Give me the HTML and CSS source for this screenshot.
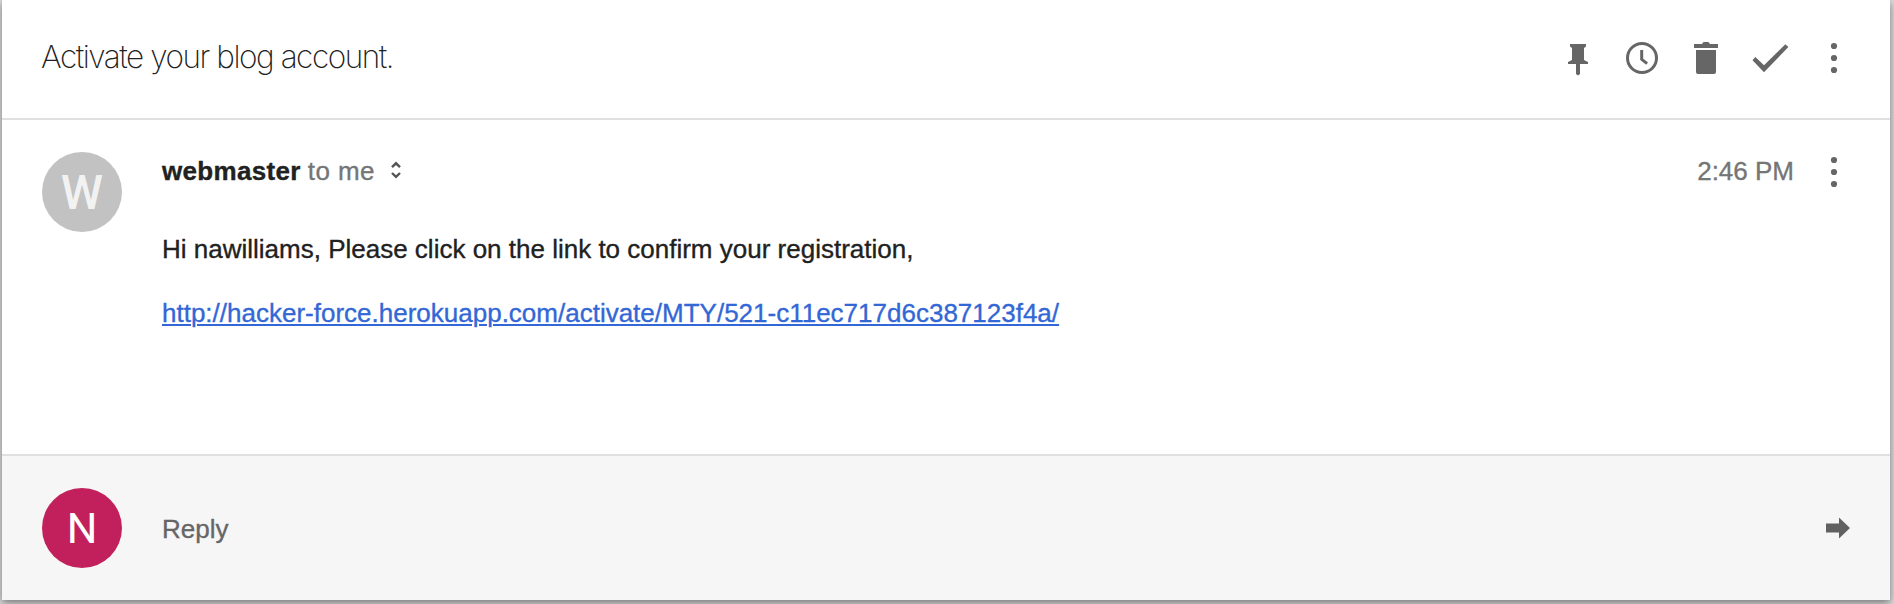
FILE: index.html
```
<!DOCTYPE html>
<html lang="en">
<head>
<meta charset="utf-8">
<title>Activate your blog account.</title>
<link rel="stylesheet" href="styles.css">
</head>
<body>
<main class="card">
  <header class="header">
    <h1 class="subject">Activate your blog account.</h1>
    <div class="actions">
      <svg class="icon" viewBox="0 0 48 48"><path d="M16 10h16v2.500l-2 1.500v12l4 2v2h-8v10l-2 1.500-2-1.500V30h-8v-2l4-2V14l-2-1.500z"/></svg>
      <svg class="icon" viewBox="0 0 48 48"><circle class="line" cx="24" cy="24" r="14.500"/><path class="line" d="M23.700 16v9.300l5.400 4.300"/></svg>
      <svg class="icon" viewBox="0 0 48 48"><path d="M12 10h8l1.500-2h5l1.500 2h8v4H12zM14 16h20v22a2 2 0 0 1-2 2H16a2 2 0 0 1-2-2z"/></svg>
      <svg class="icon" viewBox="0 0 48 48"><path d="M6.500 26.300 18 38.300 42.400 13 39.400 10.200 18 31.300 9.300 23z"/></svg>
      <svg class="icon" viewBox="0 0 48 48"><circle cx="24" cy="12" r="3.100"/><circle cx="24" cy="24" r="3.100"/><circle cx="24" cy="36" r="3.100"/></svg>
    </div>
  </header>
  <article class="message">
    <div class="avatar avatar-sender">W</div>
    <div class="content">
      <div class="meta">
        <span class="sender">webmaster</span>
        <span class="recipient">to me</span>
        <svg class="expand" viewBox="0 0 10 18"><path d="M1 6.200 5 2.300l4 3.900M1 12l4 3.900L9 12"/></svg>
        <span class="time">2:46 PM</span>
        <svg class="icon" viewBox="0 0 48 48"><circle cx="24" cy="12" r="3.100"/><circle cx="24" cy="24" r="3.100"/><circle cx="24" cy="36" r="3.100"/></svg>
      </div>
      <p class="text">Hi nawilliams, Please click on the link to confirm your registration,</p>
      <p class="text"><a class="link" href="#">http://hacker-force.herokuapp.com/activate/MTY/521-c11ec717d6c387123f4a/</a></p>
    </div>
  </article>
  <footer class="reply">
    <div class="avatar avatar-me">N</div>
    <span class="reply-label">Reply</span>
    <svg class="send" viewBox="0 0 24 22"><path d="M0 6.500h13V.5L24 11 13 21.500v-6H0z"/></svg>
  </footer>
</main>
</body>
</html>
```
FILE: styles.css
```
* { box-sizing: border-box; }
body {
  margin: 0;
  height: 604px;
  overflow: hidden;
  background: #dadada;
  font-family: "Liberation Sans", Arial, sans-serif;
  font-size: 26px;
  color: #212121;
  -webkit-text-stroke: .35px currentColor;
}
.card {
  width: 1888px;
  height: 600px;
  margin-left: 2px;
  display: flex;
  flex-direction: column;
  background: #fff;
  box-shadow: 0 3px 8px rgba(0, 0, 0, .45);
}
.header {
  height: 120px;
  flex: none;
  display: flex;
  align-items: center;
  justify-content: space-between;
  padding: 0 32px 2px 39px;
  border-bottom: 2px solid #e0e0e0;
}
.subject {
  margin: 0;
  padding-bottom: 2px;
  font-family: Inter, "Liberation Sans", sans-serif;
  font-size: 31.500px;
  font-weight: 200;
  line-height: 40px;
  letter-spacing: -1.450px;
  -webkit-text-stroke: 0;
}
.actions { display: flex; gap: 16px; }
.icon { width: 48px; height: 48px; flex: none; fill: #666; }
.line { fill: none; stroke: #666; stroke-width: 3; }
.message {
  height: 336px;
  flex: none;
  display: flex;
  align-items: flex-start;
  gap: 40px;
  padding: 32px 32px 0 40px;
  border-bottom: 2px solid #e0e0e0;
}
.avatar {
  width: 80px;
  height: 80px;
  flex: none;
  border-radius: 50%;
  text-align: center;
  font-family: Roboto, sans-serif;
  -webkit-text-stroke: 0;
}
.avatar-sender {
  background: #c2c2c2;
  color: #f2f2f2;
  font-size: 48px;
  font-weight: 500;
  line-height: 81px;
}
.avatar-me {
  background: #c2205d;
  color: #fff;
  font-size: 43px;
  line-height: 80px;
}
.content { flex: 1; }
.meta {
  height: 40px;
  display: flex;
  align-items: center;
  line-height: 38px;
}
.sender { padding-bottom: 2px; font-weight: 700; letter-spacing: .330px; }
.recipient { padding-bottom: 2px; margin-left: 7px; color: #757575; letter-spacing: .400px; }
.expand {
  width: 10px;
  height: 18px;
  margin: -4px 0 0 16px;
  fill: none;
  stroke: #555;
  stroke-width: 2.400;
}
.time { padding-bottom: 2px; margin-left: auto; margin-right: 16px; color: #757575; }
.text { margin: 0; line-height: 64px; height: 64px; }
.text:first-of-type { margin-top: 25px; }
.link {
  color: #3367d6;
  text-decoration-thickness: 2px;
  text-underline-offset: 2px;
}
.reply {
  height: 144px;
  flex: none;
  display: flex;
  align-items: center;
  padding: 0 40px;
  background: #f6f6f6;
}
.reply-label { padding-top: 2px; margin-left: 40px; color: #666; }
.send { width: 24px; height: 22px; margin-left: auto; fill: #616161; }
```
